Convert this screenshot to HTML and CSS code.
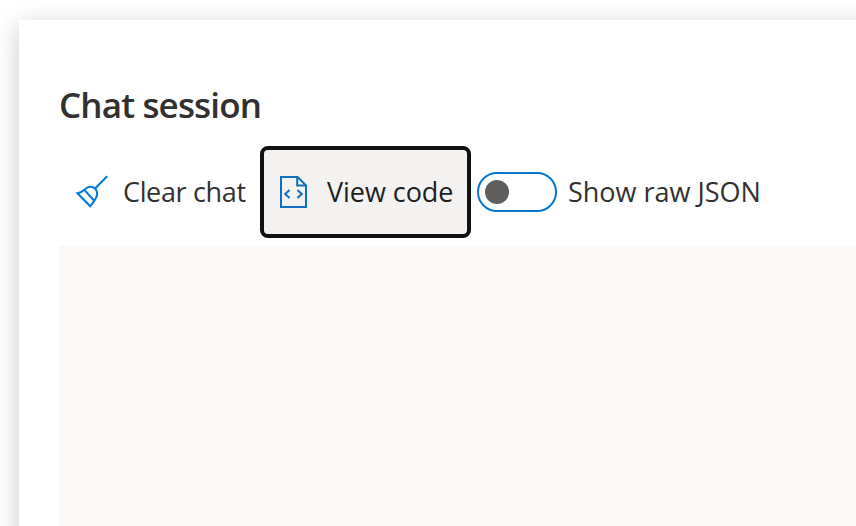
FILE: index.html
```html
<!DOCTYPE html>
<html lang="en">
<head>
<meta charset="utf-8">
<title>Chat session</title>
<link rel="stylesheet" href="styles.css">
</head>
<body>
<main class="panel">
  <h1 class="title"><span>Chat session</span></h1>
  <div class="toolbar">
    <button class="command clear" type="button">
      <svg class="icon" width="34" height="34" viewBox="0 0 34 34" fill="none" stroke="#0078d4" stroke-width="2">
        <path d="M32.2 1.3 20.3 13.2M2.5 18.2 15.2 31.3C18 28 19.7 25.5 21.2 22.5 22.6 19.3 22.2 15.8 20.2 13.7 17.5 11 13.2 11.4 10.2 14 8.2 15.8 6.3 17.6 2.5 18.2ZM9.3 14.9 18.8 25.2"/>
      </svg>
      <span class="label">Clear chat</span>
    </button>
    <button class="command view" type="button">
      <svg class="icon" width="28" height="32" viewBox="0 0 28 32" fill="none" stroke="#106ebe" stroke-width="2">
        <path d="M1 1H17.6L26 9.4V31H1ZM17.2 1V9.5H26"/>
        <path d="M9.6 14 5.2 18 9.6 22M17.4 14 21.8 18 17.4 22"/>
      </svg>
      <span class="label">View code</span>
    </button>
    <button class="toggle" type="button" role="switch" aria-checked="false"><span class="thumb"></span></button>
    <span class="label raw">Show raw JSON</span>
  </div>
  <section class="chat"></section>
</main>
</body>
</html>
```

FILE: styles.css
```css
* {
  box-sizing: border-box;
}

body {
  margin: 0;
  height: 526px;
  padding: 20px 0 0 19px;
  overflow: hidden;
  background: #fff;
  color: #323130;
  font-family: "Segoe UI", "Open Sans", "Noto Sans", sans-serif;
}

.panel {
  display: flex;
  flex-direction: column;
  width: 900px;
  height: 560px;
  padding: 61px 0 0 40px;
  background: #fff;
  box-shadow: 0 6px 24px rgba(0, 0, 0, 0.21);
}

.title {
  margin: 0;
  height: 65px;
  font-size: 35px;
  font-weight: 600;
  line-height: 48px;
  letter-spacing: -0.85px;
  white-space: nowrap;
}

.toolbar {
  display: flex;
  align-items: center;
  height: 92px;
}

.command {
  display: flex;
  align-items: center;
  height: 92px;
  margin: 0;
  padding: 0;
  border: 0;
  background: none;
  color: inherit;
  font: inherit;
}

.icon {
  flex: none;
}

.label {
  font-size: 27px;
  line-height: 40px;
  white-space: nowrap;
}

.clear {
  width: 201px;
  padding-left: 16px;
}

.clear .label {
  margin-left: 14px;
  letter-spacing: -0.35px;
}

.view {
  width: 211px;
  padding-left: 16px;
  border: 4px solid #111;
  border-radius: 8px;
  background: #f3f2f1;
  color: #201f1e;
}

.view .label {
  margin-left: 19px;
  letter-spacing: -0.05px;
}

.toggle {
  display: flex;
  align-items: center;
  width: 80px;
  height: 40px;
  margin: 0 0 0 6px;
  padding: 0 6px;
  border: 2px solid #0078d4;
  border-radius: 20px;
  background: #fff;
}

.thumb {
  width: 24px;
  height: 24px;
  border-radius: 50%;
  background: #605e5c;
}

.raw {
  margin-left: 11px;
}

.chat {
  flex: 1;
  margin-top: 8px;
  background: #faf9f8;
}
```
